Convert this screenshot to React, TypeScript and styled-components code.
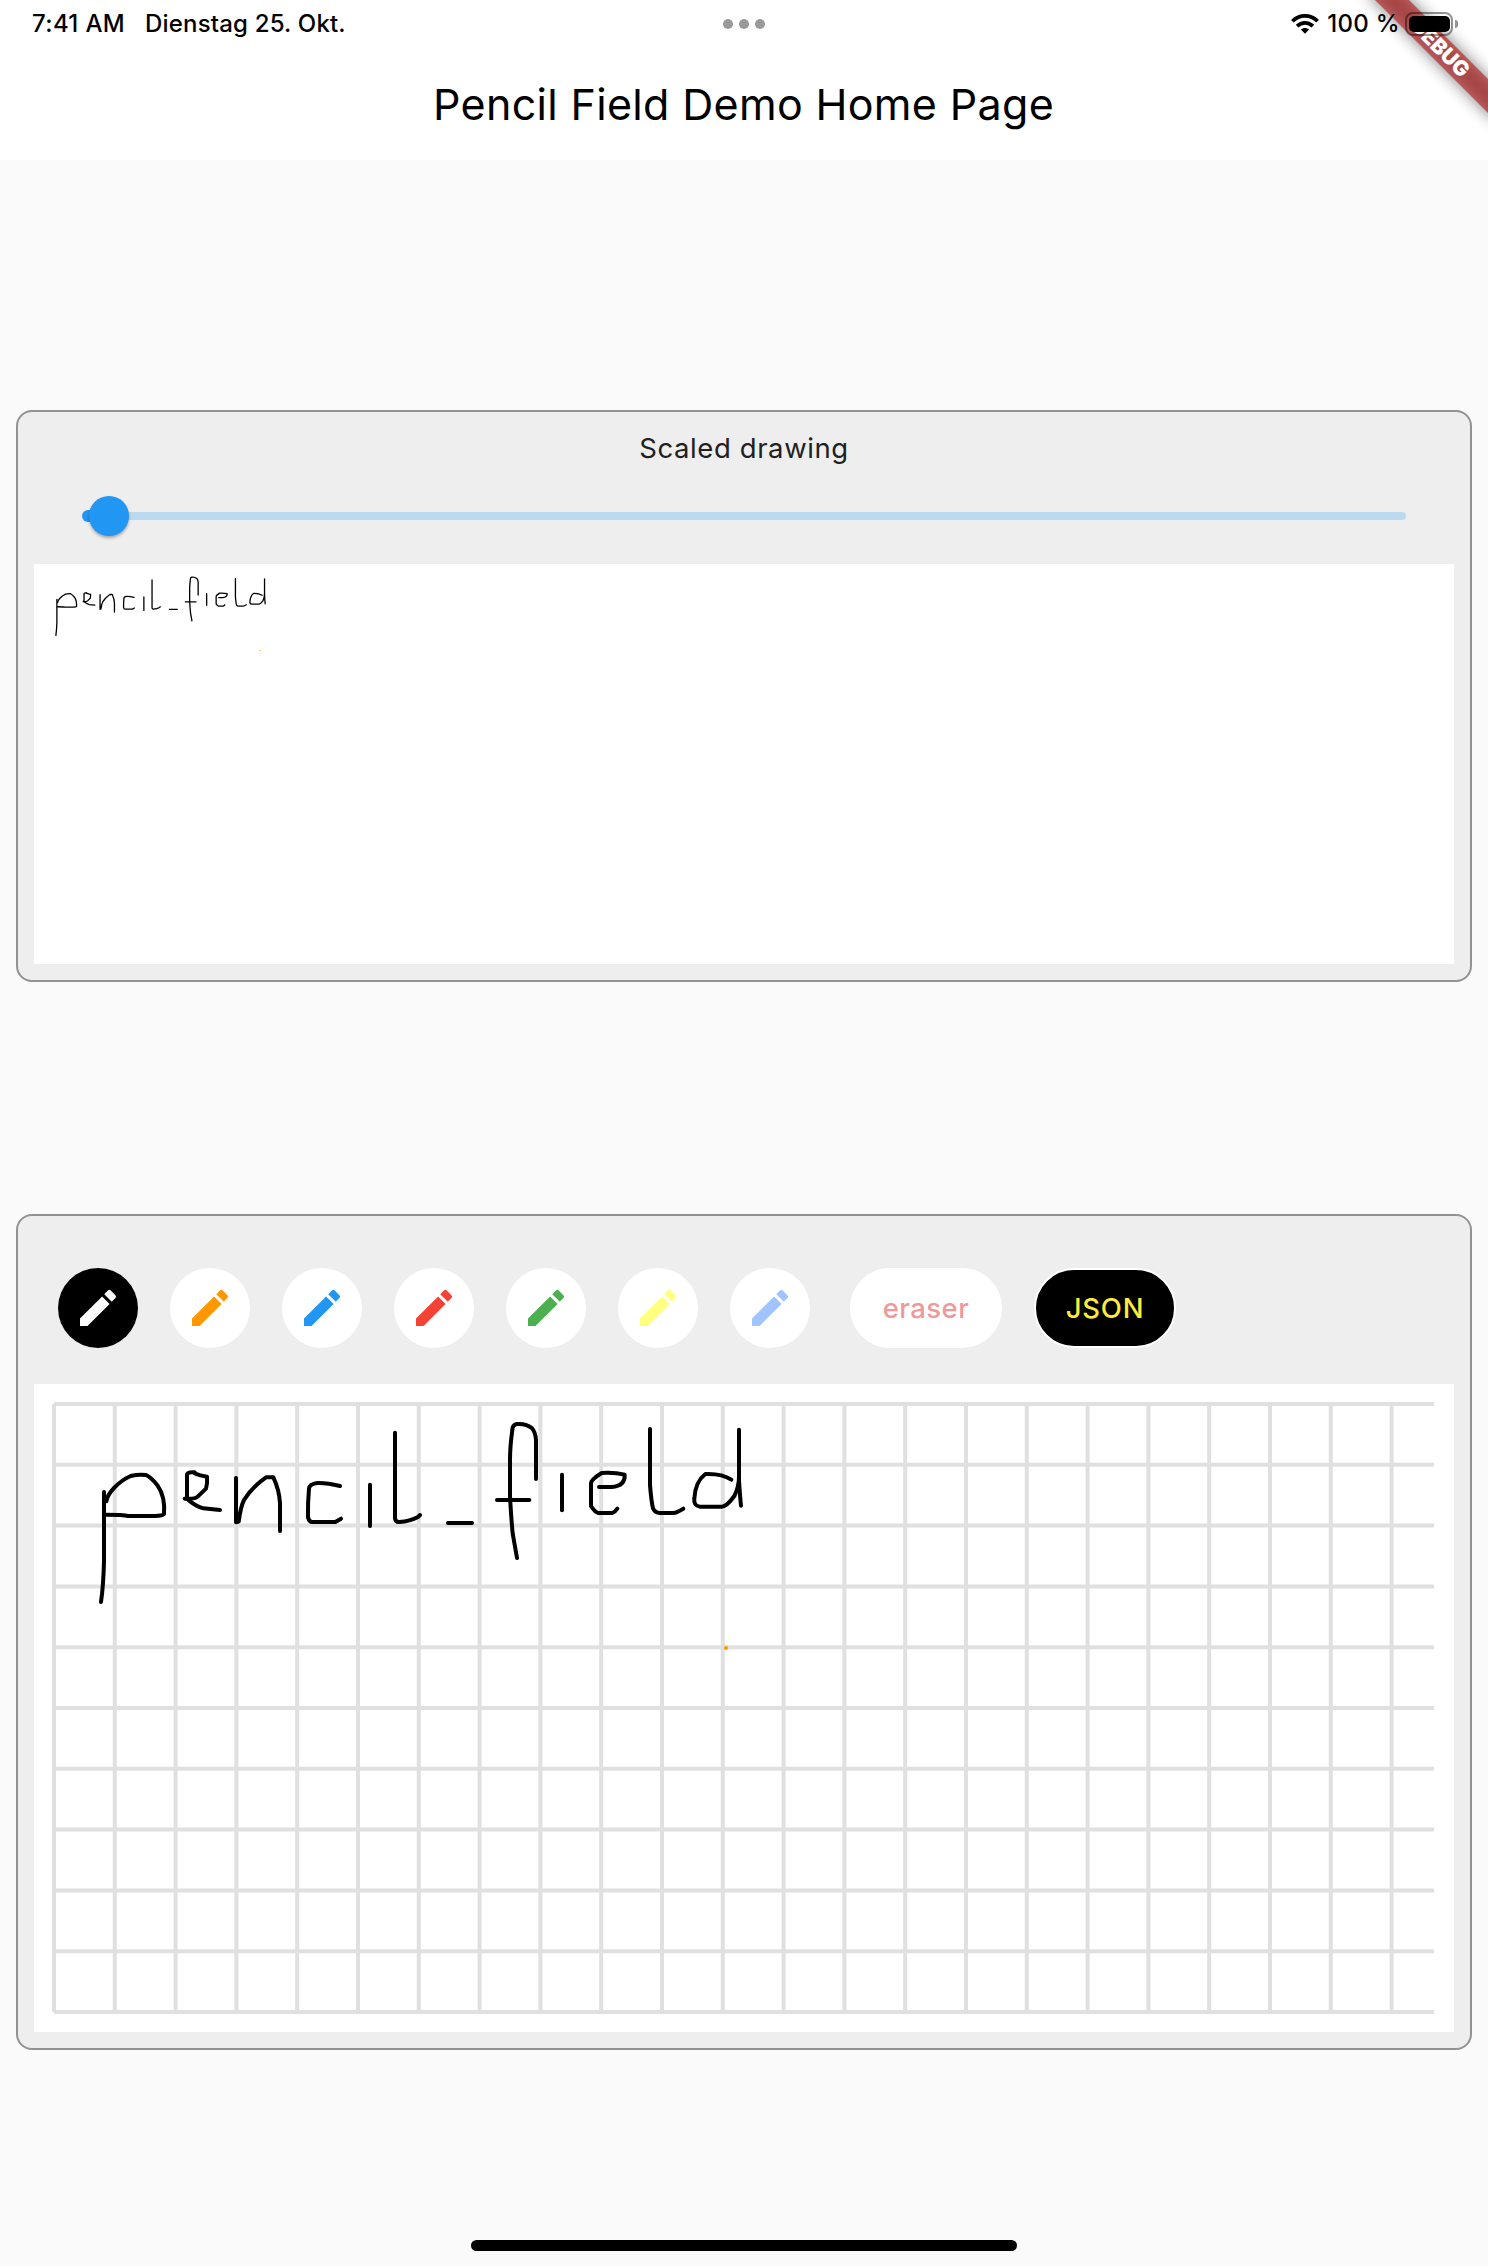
import React from "react";
import styled, { createGlobalStyle } from "styled-components";
import { MdEdit } from "react-icons/md";

const GlobalStyle = createGlobalStyle`
  * { box-sizing: border-box; }
  body {
    margin: 0;
    background: #fafafa;
    color: #000;
    font-family: Inter, "Liberation Sans", sans-serif;
  }
`;

const Screen = styled.div`
  width: 1488px;
  height: 2266px;
  display: flex;
  flex-direction: column;
  background: #fafafa;
`;

const Header = styled.header`
  position: relative;
  height: 160px;
  display: flex;
  flex-direction: column;
  background: #fff;
  overflow: hidden;
`;

const StatusBar = styled.div`
  position: relative;
  z-index: 1;
  height: 48px;
  display: grid;
  grid-template-columns: 1fr auto 1fr;
  align-items: center;
  padding: 0 30px;
`;

const StatusGroup = styled.div<{ $end?: boolean }>`
  display: flex;
  align-items: center;
  justify-content: ${(p) => (p.$end ? "flex-end" : "flex-start")};
`;

const StatusText = styled.span<{ $spacing: number; $before: number }>`
  margin-left: ${(p) => p.$before}px;
  font-size: 24px;
  line-height: 30px;
  font-weight: 500;
  letter-spacing: ${(p) => p.$spacing}px;
  white-space: nowrap;
`;

const Dots = styled.div`
  display: flex;
  gap: 6px;
`;

const Dot = styled.span`
  width: 10px;
  height: 10px;
  border-radius: 50%;
  background: #999;
`;

const Battery = styled.div`
  width: 48px;
  height: 24px;
  margin-left: 5px;
  padding: 2px;
  border: 2px solid rgba(0, 0, 0, 0.42);
  border-radius: 8px;
`;

const BatteryFill = styled.div`
  width: 41px;
  height: 16px;
  border-radius: 5px;
  background: #000;
`;

const BatteryTip = styled.span`
  width: 3px;
  height: 8px;
  margin-left: 2px;
  border-radius: 0 4px 4px 0;
  background: rgba(0, 0, 0, 0.42);
`;

const PageTitle = styled.h1`
  flex: 1;
  margin: 0;
  padding-right: 1px;
  display: flex;
  align-items: center;
  justify-content: center;
  font-size: 43px;
  font-weight: 400;
  letter-spacing: 0.33px;
`;

const DebugBanner = styled.div`
  position: absolute;
  top: 36px;
  right: -42px;
  width: 180px;
  height: 24px;
  transform: rotate(45deg);

  &::before {
    content: "";
    position: absolute;
    inset: 0;
    background: rgba(0, 0, 0, 0.5);
    filter: blur(8px);
  }
`;

const DebugLabel = styled.div`
  position: relative;
  height: 24px;
  background: rgba(183, 28, 28, 0.627);
  color: #fff;
  font-size: 21px;
  line-height: 24px;
  font-weight: 900;
  text-align: center;
`;

const Body = styled.main`
  flex: 1;
  display: flex;
  flex-direction: column;
  gap: 232px;
  padding: 250px 16px 0;
`;

const Card = styled.section`
  padding: 16px;
  border: 2px solid #929292;
  border-radius: 16px;
  background: #eee;
`;

const CardTitle = styled.div`
  height: 40px;
  display: flex;
  align-items: center;
  justify-content: center;
  font-size: 27.5px;
  letter-spacing: 0.6px;
  color: #212121;
`;

const Slider = styled.div`
  height: 96px;
  display: flex;
  align-items: center;
  padding: 0 48px;
`;

const ActiveTrack = styled.div`
  width: 27px;
  height: 12px;
  border-radius: 6px 0 0 6px;
  background: #2196f3;
`;

const Thumb = styled.div`
  position: relative;
  width: 40px;
  height: 40px;
  margin: 0 -20px;
  border-radius: 50%;
  background: #2196f3;
  box-shadow: 0 2px 3px rgba(0, 0, 0, 0.3);
`;

const InactiveTrack = styled.div`
  flex: 1;
  height: 8px;
  border-radius: 0 4px 4px 0;
  background: #bbd9ef;
`;

const Paper = styled.div<{ $height: number }>`
  height: ${(p) => p.$height}px;
  background: #fff;

  svg {
    display: block;
  }
`;

const Toolbar = styled.div`
  height: 152px;
  display: flex;
  align-items: center;
  gap: 32px;
  padding-left: 24px;
`;

const PenButton = styled.button<{ $color: string; $selected?: boolean }>`
  width: 80px;
  height: 80px;
  display: flex;
  align-items: center;
  justify-content: center;
  padding: 0;
  border: 0;
  border-radius: 50%;
  background: ${(p) => (p.$selected ? "#000" : "#fff")};
  color: ${(p) => p.$color};
  font-size: 48px;
`;

const PillButton = styled.button<{ $dark?: boolean }>`
  width: ${(p) => (p.$dark ? 142 : 152)}px;
  height: 80px;
  margin-left: ${(p) => (p.$dark ? 0 : 8)}px;
  padding: 0;
  border: 2px solid #fff;
  border-radius: 40px;
  background: ${(p) => (p.$dark ? "#000" : "#fff")};
  color: ${(p) => (p.$dark ? "#ffeb3b" : "#ef9a9a")};
  font-family: inherit;
  font-size: 27.5px;
  font-weight: 500;
  letter-spacing: ${(p) => (p.$dark ? 0.75 : 0.45)}px;
`;

const HomeIndicator = styled.div`
  align-self: center;
  width: 546px;
  height: 11px;
  margin-bottom: 15px;
  border-radius: 5.5px;
  background: #000;
`;

const pens = ["#ffffff", "#ff9800", "#2196f3", "#f44336", "#4caf50", "#ffff80", "#a0c4ff"];

const CELL = 60.8;

const firstWord = [
  "M192 336L192 545Q190 620 183 666",
  "M199 364Q202 345 222 324Q245 300 272 288Q295 282 318 285Q335 293 353 317Q376 350 372 402Q368 407 345 408L265 408Q250 404 196 404",
  "M464 277Q445 275 441 283L441 354",
  "M434 356Q465 358 473 350L498 326Q503 310 501 290Q480 287 464 280",
  "M441 356Q465 378 490 385L540 390",
  "M588 294L588 427L596 425Q602 380 612 360Q635 322 678 292L700 292Q718 330 720 370L720 453",
  "M900 318Q860 308 832 309Q808 312 807 326Q803 370 804 412Q808 426 816 426L886 426L903 416",
  "M990 314L990 438",
  "M1065 158L1065 415Q1067 427 1078 426Q1110 424 1134 411L1140 405",
];

const secondWord = [
  "M84 429L156 429",
  "M348 297L348 180Q346 155 336 145Q320 130 290 132Q277 135 277 150Q270 200 270 240L270 350Q274 420 278 460L291 534",
  "M231 360L328 360",
  "M426 284L426 391",
  "M537 321L575 321Q616 318 614 284Q585 277 545 279Q514 298 513 310L513 378Q525 397 535 399L577 399Q585 396 592 386",
  "M690 147L690 315Q694 365 699 385Q705 399 720 399L760 399Q770 398 790 386",
  "M934 299Q905 280 856 282Q826 305 823 355Q820 378 840 380L905 380Q920 380 943 348Q957 320 957 290",
  "M957 149L957 300Q960 350 963 377",
];

function Drawing({ scale = 1 }: { scale?: number }) {
  return (
    <g
      transform={`scale(${scale / 3})`}
      fill="none"
      stroke="#000"
      strokeWidth={12}
      strokeLinecap="round"
      strokeLinejoin="round"
    >
      <g transform="translate(18 -12)">
        {firstWord.map((d) => (
          <path key={d} d={d} />
        ))}
      </g>
      <g transform="translate(1158 -12)">
        {secondWord.map((d) => (
          <path key={d} d={d} />
        ))}
        <circle cx={918} cy={804} r={6} fill="#ff9800" stroke="none" />
      </g>
    </g>
  );
}

function Grid() {
  return (
    <g stroke="#e0e0e0" strokeWidth={4}>
      {Array.from({ length: 23 }, (_, i) => (
        <line key={`v${i}`} x1={20 + i * CELL} x2={20 + i * CELL} y1={20} y2={628} />
      ))}
      {Array.from({ length: 11 }, (_, i) => (
        <line key={`h${i}`} x1={20} x2={1400} y1={20 + i * CELL} y2={20 + i * CELL} />
      ))}
    </g>
  );
}

function WifiIcon() {
  return (
    <svg width="28" height="20" viewBox="0 0 28 20" fill="none" stroke="#000" strokeWidth="3.8">
      <path d="M1.4 7.3C8.4 .1 19.6 .1 26.6 7.3" />
      <path d="M6.1 12.1C10.6 7.7 17.4 7.7 21.9 12.1" />
      <path d="M14 19.7L9.9 15.6C12.2 13.5 15.8 13.5 18.1 15.6Z" fill="#000" stroke="none" />
    </svg>
  );
}

export default function App() {
  return (
    <>
      <GlobalStyle />
      <Screen>
        <Header>
          <StatusBar>
            <StatusGroup>
              <StatusText $spacing={0.35} $before={2}>
                7:41 AM
              </StatusText>
              <StatusText $spacing={0.18} $before={20}>
                Dienstag 25. Okt.
              </StatusText>
            </StatusGroup>
            <Dots>
              <Dot />
              <Dot />
              <Dot />
            </Dots>
            <StatusGroup $end>
              <WifiIcon />
              <StatusText $spacing={0.3} $before={8}>
                100 %
              </StatusText>
              <Battery>
                <BatteryFill />
              </Battery>
              <BatteryTip />
            </StatusGroup>
          </StatusBar>
          <PageTitle>Pencil Field Demo Home Page</PageTitle>
          <DebugBanner>
            <DebugLabel>DEBUG</DebugLabel>
          </DebugBanner>
        </Header>
        <Body>
          <Card>
            <CardTitle>Scaled drawing</CardTitle>
            <Slider>
              <ActiveTrack />
              <Thumb />
              <InactiveTrack />
            </Slider>
            <Paper $height={400}>
              <svg width="1420" height="400">
                <Drawing scale={0.327} />
              </svg>
            </Paper>
          </Card>
          <Card>
            <Toolbar>
              {pens.map((color, i) => (
                <PenButton key={color} $color={color} $selected={i === 0}>
                  <MdEdit />
                </PenButton>
              ))}
              <PillButton>eraser</PillButton>
              <PillButton $dark>JSON</PillButton>
            </Toolbar>
            <Paper $height={648}>
              <svg width="1420" height="648">
                <Grid />
                <Drawing />
              </svg>
            </Paper>
          </Card>
        </Body>
        <HomeIndicator />
      </Screen>
    </>
  );
}
